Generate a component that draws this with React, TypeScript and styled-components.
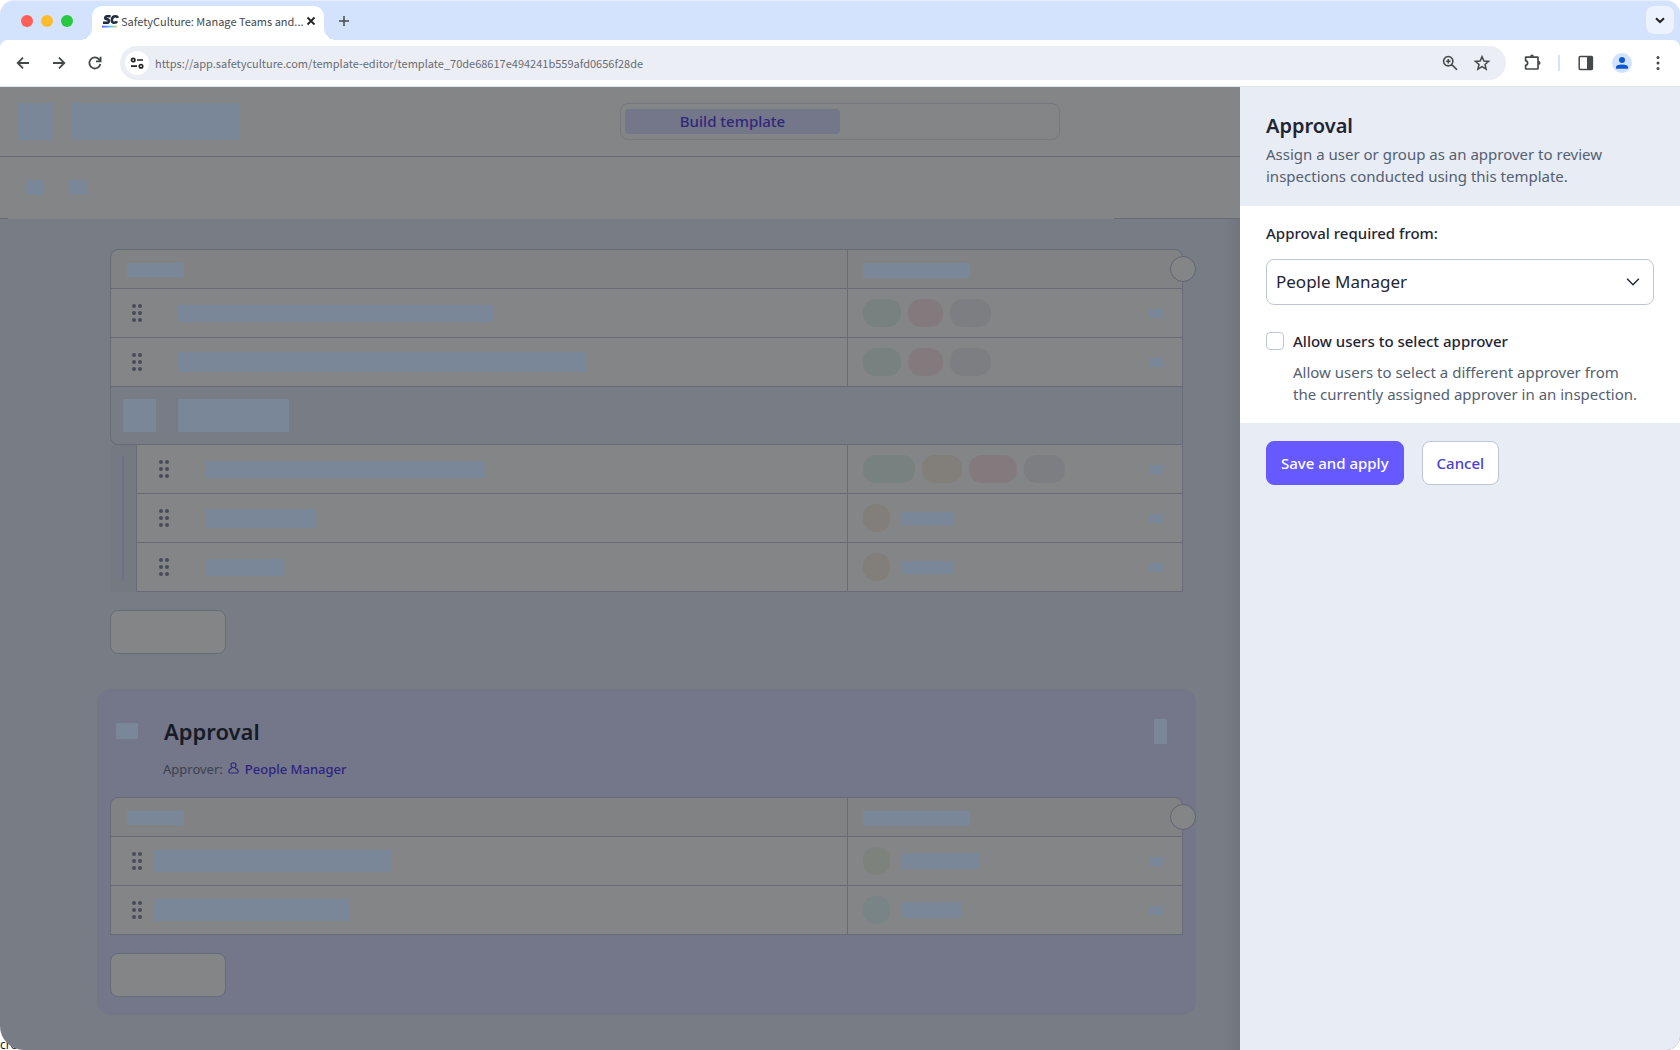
import React from "react";
import styled, { createGlobalStyle } from "styled-components";

const sans = `"Noto Sans", "Open Sans", sans-serif`;
const chromeSans = `"Noto Sans CJK SC", "Noto Sans", sans-serif`;

const c = {
  strip: "#d3e2fd",
  dimSurface: "#848587",
  dimHead: "#818284",
  dimCanvas: "#787c84",
  dimSection: "#787d85",
  dimLine: "#676b78",
  dimAccent: "#74768a",
  block: "#7a8799",
  green: "#778180",
  red: "#837a7e",
  grey: "#7d7e81",
  amber: "#827f7a",
  olive: "#7d827c",
  teal: "#788486",
  panel: "#e8ecf5",
  ink: "#1f2533",
  muted: "#545f70",
  outline: "#bfc6d4",
};

const GlobalStyle = createGlobalStyle`
  *, *::before, *::after { box-sizing: border-box; }
  html, body { margin: 0; background: #fff; }
  body { font-family: ${sans}; color: ${c.ink}; overflow: hidden; }
  button, select, input { font: inherit; margin: 0; }
  h1, h2, p { margin: 0; }
  svg { display: block; flex: none; }
`;

const Window = styled.div`
  position: relative;
  display: flex;
  flex-direction: column;
  height: 100vh;
`;

const CornerCaption = styled.span`
  position: absolute;
  left: 0;
  bottom: 0;
  font-size: 12px;
  line-height: 10px;
  color: #222;
`;

/* ---------- browser chrome ---------- */

const TabStrip = styled.div`
  display: flex;
  align-items: flex-end;
  height: 48px;
  margin-bottom: -8px;
  padding: 0 6px 8px 21px;
  background: ${c.strip};
  border-top: 1px solid #e6eefc;
  border-radius: 14px 14px 0 0;
`;

const Lights = styled.div`
  display: flex;
  align-self: flex-start;
  gap: 8px;
  margin: 14px 19px 0 0;
`;

const Light = styled.span<{ $color: string }>`
  width: 12px;
  height: 12px;
  border-radius: 50%;
  background: ${(p) => p.$color};
`;

const Tab = styled.div`
  position: relative;
  display: flex;
  align-items: center;
  gap: 2px;
  width: 232px;
  height: 34px;
  padding: 0 9px 4px 10px;
  background: #fff;
  border-radius: 10px 10px 0 0;
  &::before,
  &::after {
    content: "";
    position: absolute;
    bottom: 0;
    width: 12px;
    height: 12px;
  }
  &::before {
    right: 100%;
    background: radial-gradient(circle at 0 0, transparent 12px, #fff 12px);
  }
  &::after {
    left: 100%;
    background: radial-gradient(circle at 100% 0, transparent 12px, #fff 12px);
  }
`;

const TabTitle = styled.span`
  flex: 1;
  font-family: ${chromeSans};
  font-size: 11px;
  line-height: 18px;
  white-space: nowrap;
  color: #45484c;
`;

const IconButton = styled.button<{ $size?: number }>`
  display: grid;
  place-items: center;
  flex: none;
  width: ${(p) => p.$size ?? 20}px;
  height: ${(p) => p.$size ?? 20}px;
  padding: 0;
  border: 0;
  background: none;
  color: #46494a;
`;

const NewTab = styled(IconButton)`
  margin: 0 auto 9px 10px;
`;

const TabSearch = styled(IconButton)`
  margin-bottom: 6px;
  border-radius: 8px;
  background: #ecf2fe;
  color: #222;
`;

const Toolbar = styled.div`
  position: relative;
  display: flex;
  align-items: center;
  height: 47px;
  padding: 0 12px 0 13px;
  background: #fff;
  border-bottom: 1px solid #e3e6e8;
  border-radius: 8px 8px 0 0;
`;

const NavButtons = styled.div`
  display: flex;
  gap: 16px;
  margin-right: 15px;
`;

const AddressBar = styled.div`
  display: flex;
  align-items: center;
  flex: 1;
  gap: 6px;
  height: 34px;
  padding: 0 14px 0 5px;
  border-radius: 17px;
  background: #eceef6;
`;

const SiteInfo = styled(IconButton)`
  border-radius: 50%;
  background: #fff;
  color: #222;
`;

const UrlInput = styled.input`
  flex: 1;
  min-width: 0;
  padding: 0;
  border: 0;
  outline: 0;
  background: none;
  font-family: ${chromeSans};
  font-size: 11px;
  line-height: 18px;
  color: #696c71;
`;

const BarActions = styled.div`
  display: flex;
  gap: 12px;
`;

const ToolbarActions = styled.div`
  display: flex;
  align-items: center;
  gap: 16px;
  margin-left: 16px;
`;

const BarDivider = styled.span`
  width: 2px;
  height: 16px;
  background: ${c.strip};
`;

/* ---------- page ---------- */

const Page = styled.div`
  position: relative;
  display: flex;
  flex: 1;
  min-height: 0;
  border-radius: 0 0 14px 24px;
  overflow: hidden;
`;

const Editor = styled.main`
  display: flex;
  flex-direction: column;
  flex: 1;
  min-width: 0;
  background: ${c.dimCanvas};
`;

const EditorHeader = styled.header`
  display: grid;
  grid-template-columns: 1fr auto 1fr;
  align-items: center;
  height: 70px;
  padding: 0 17px 1px;
  background: ${c.dimSurface};
  border-bottom: 1px solid ${c.dimLine};
`;

const BlockGroup = styled.div<{ $gap: number }>`
  display: flex;
  gap: ${(p) => p.$gap}px;
`;

const Block = styled.span<{ $w: number; $h: number }>`
  display: block;
  flex: none;
  width: ${(p) => p.$w}px;
  height: ${(p) => p.$h}px;
  border-radius: 1px;
  background: ${c.block};
`;

const Segmented = styled.div`
  display: grid;
  grid-template-columns: 215px 215px;
  width: 440px;
  height: 37px;
  padding: 5px 4px;
  border: 1px solid #76787f;
  border-radius: 8px;
`;

const Segment = styled.button<{ $active?: boolean }>`
  padding: 0;
  border: 0;
  border-radius: 4px;
  background: ${(p) => (p.$active ? c.dimAccent : "transparent")};
  color: #2f2879;
  font-size: 15px;
  line-height: 20px;
  font-weight: 500;
`;

const SubHeader = styled.div`
  display: flex;
  align-items: center;
  height: 62px;
  padding: 0 26px 2px;
  background: linear-gradient(${c.dimLine}, ${c.dimLine}) 0 100% / 8px 1px no-repeat,
    linear-gradient(${c.dimLine}, ${c.dimLine}) 100% 100% / 566px 1px no-repeat,
    ${c.dimSurface};
`;

const Canvas = styled.div`
  flex: 1;
  margin-right: 440px;
  padding: 30px 44px 35px 97px;
  background: linear-gradient(90deg, transparent calc(100% - 16px), #70747c 100%);
`;

const Section = styled.section`
  padding: 0 13px;
`;

const ApprovalCard = styled.section`
  margin-top: 35px;
  padding: 29px 13px 18px;
  border-radius: 14px;
  background: ${c.dimAccent};
`;

const Grid = styled.div`
  position: relative;
  border-top: 1px solid ${c.dimLine};
  border-radius: 8px 8px 0 0;
`;

const RowBox = styled.div<{ $head?: boolean }>`
  display: grid;
  grid-template-columns: minmax(0, 1fr) 334px;
  height: ${(p) => (p.$head ? 39 : 49)}px;
  background: ${(p) => (p.$head ? c.dimHead : c.dimSurface)};
  border: 1px solid ${c.dimLine};
  border-top: 0;
  border-radius: ${(p) => (p.$head ? "8px 8px 0 0" : "0")};
`;

const NameCell = styled.div<{ $gap?: number; $head?: boolean }>`
  display: flex;
  align-items: center;
  gap: ${(p) => p.$gap ?? 36}px;
  padding-top: ${(p) => (p.$head ? 2 : 0)}px;
  padding-left: ${(p) => (p.$head ? 16 : 21)}px;
  border-right: 1px solid ${c.dimLine};
`;

const ReplyCell = styled.div<{ $gap?: number; $head?: boolean }>`
  display: flex;
  align-items: center;
  gap: ${(p) => p.$gap ?? 7}px;
  padding: ${(p) => (p.$head ? 2 : 0)}px 18px 0 15px;
`;

const Trailing = styled.span`
  margin-left: auto;
`;

const Pill = styled.span<{ $w: number; $color: string }>`
  width: ${(p) => p.$w}px;
  height: 28px;
  border-radius: 13px;
  background: ${(p) => p.$color};
`;

const SectionRow = styled.div`
  display: flex;
  align-items: center;
  gap: 22px;
  height: 58px;
  padding-left: 12px;
  background: ${c.dimSection};
  border: 1px solid ${c.dimLine};
  border-top: 0;
  border-radius: 0 0 0 8px;
`;

const Nested = styled.div`
  display: flex;
  background: linear-gradient(90deg, #757982, #757982) 0 0 / 26px 100% no-repeat;
`;

const Gutter = styled.div`
  flex: none;
  width: 26px;
  padding: 11px 12px;
  &::before {
    content: "";
    display: block;
    width: 2px;
    height: 100%;
    background: #6f7089;
  }
`;

const NestedRows = styled.div`
  flex: 1;
  min-width: 0;
  ${NameCell} {
    padding-left: 22px;
  }
`;

const AddRound = styled.button`
  position: absolute;
  top: 6px;
  right: -13px;
  width: 26px;
  height: 26px;
  padding: 0;
  border: 1px solid #60656f;
  border-radius: 50%;
  background: ${c.dimSurface};
`;

const GhostButton = styled.button`
  display: block;
  width: 116px;
  height: 44px;
  margin-top: 18px;
  border: 1px solid ${c.dimLine};
  border-radius: 8px;
  background: ${c.dimSurface};
`;

const CardTop = styled.div`
  display: flex;
  align-items: center;
  padding: 0 16px 0 6px;
`;

const CardTitle = styled.h2`
  margin: 0 auto 0 26px;
  font-size: 22px;
  line-height: 26px;
  font-weight: 600;
  color: #171b26;
`;

const ApproverLine = styled.p`
  display: flex;
  align-items: center;
  gap: 5px;
  margin: 15px 0 18px 53px;
  font-size: 13px;
  line-height: 20px;
  color: #3c414e;
`;

const ApproverLink = styled.a`
  display: inline-flex;
  align-items: center;
  gap: 6px;
  font-weight: 500;
  color: #2c2480;
  text-decoration: none;
`;

/* ---------- side panel: a drawer that lies over the editor ---------- */

const Panel = styled.aside`
  position: absolute;
  top: 0;
  right: 0;
  bottom: 0;
  width: 440px;
  background: ${c.panel};
`;

const PanelHead = styled.header`
  padding: 26px 26px 19px;
`;

const PanelTitle = styled.h1`
  margin-bottom: 4px;
  font-size: 20px;
  line-height: 26px;
  font-weight: 600;
`;

const Muted = styled.p`
  font-size: 15px;
  line-height: 22px;
  color: ${c.muted};
`;

const PanelBody = styled.div`
  padding: 16px 26px 18px;
  background: #fff;
`;

const FieldLabel = styled.label`
  display: block;
  font-size: 15px;
  line-height: 22px;
  font-weight: 500;
`;

const SelectBox = styled.div`
  position: relative;
  margin: 15px 0 25px;
  svg {
    position: absolute;
    top: 14px;
    right: 12px;
    pointer-events: none;
  }
`;

const Select = styled.select`
  display: block;
  appearance: none;
  width: 100%;
  height: 46px;
  padding: 0 40px 2px 9px;
  border: 1px solid ${c.outline};
  border-radius: 8px;
  background: #fff;
  color: ${c.ink};
  font-size: 17px;
`;

const CheckRow = styled.div`
  display: flex;
  align-items: center;
  gap: 9px;
  margin-bottom: 9px;
`;

const Checkbox = styled.input`
  appearance: none;
  width: 18px;
  height: 18px;
  border: 1px solid ${c.outline};
  border-radius: 4px;
  background: #fff;
`;

const CheckHint = styled(Muted)`
  padding: 0 14px 0 27px;
`;

const PanelActions = styled.div`
  display: flex;
  gap: 18px;
  padding: 18px 26px;
`;

const Button = styled.button<{ $primary?: boolean }>`
  height: 44px;
  padding: 0 14px;
  border: 1px solid ${(p) => (p.$primary ? "#6559ff" : c.outline)};
  border-radius: 8px;
  background: ${(p) => (p.$primary ? "#6559ff" : "#fff")};
  color: ${(p) => (p.$primary ? "#fff" : "#4740d4")};
  font-size: 15px;
  font-weight: 500;
`;

/* ---------- drawings ---------- */

const Stroke = ({ d, size = 20, width = 2 }: { d: string; size?: number; width?: number }) => (
  <svg width={size} height={size} viewBox="0 0 20 20" fill="none" stroke="currentColor" strokeWidth={width}>
    <path d={d} />
  </svg>
);

const Logo = () => (
  <svg width="17" height="14" viewBox="0 0 17 14" fill="none">
    <defs>
      <linearGradient id="underline" gradientUnits="userSpaceOnUse" x1="0" y1="0" x2="16" y2="0">
        <stop offset="0" stopColor="#6559ff" />
        <stop offset=".55" stopColor="#5cc8ff" />
        <stop offset="1" stopColor="#ffd54d" />
      </linearGradient>
    </defs>
    <path d="M8.6 2.3H5.2Q3.4 2.3 3.2 3.8Q3 5.2 5 5.3Q7.2 5.5 6.9 7.2Q6.6 8.8 4.8 8.8H1" stroke="#1f2d3d" strokeWidth="2.4" />
    <path d="M15.8 3.8Q15.4 2.3 13.4 2.3Q10.4 2.3 9.9 5.6Q9.5 8.8 12.2 8.8Q14.4 8.8 15 7.2" stroke="#1f2d3d" strokeWidth="2.6" />
    <path d="M0 12.6H15" stroke="url(#underline)" strokeWidth="1.8" />
  </svg>
);

const DragHandle = () => (
  <svg width="10" height="18" viewBox="0 0 10 18" fill="#474c59">
    {[2, 9, 16].map((y) => (
      <React.Fragment key={y}>
        <circle cx="2" cy={y} r="2" />
        <circle cx="8" cy={y} r="2" />
      </React.Fragment>
    ))}
  </svg>
);

const PersonIcon = () => (
  <svg width="11" height="14" viewBox="0 0 11 14" fill="none" stroke="currentColor" strokeWidth="1.1">
    <circle cx="5.5" cy="3.2" r="2.5" />
    <path d="M3.8 6.3C1.8 7 .8 8.4 .8 9.8Q.8 11 2 11H9Q10.2 11 10.2 9.8C10.2 8.4 9.2 7 7.2 6.3" />
  </svg>
);

/* ---------- table rows ---------- */

type Reply = { pills: [number, string][] } | { dot: string; w: number; h: number };
type RowData = { w: number; h: number; gap?: number; reply: Reply };

const fair = { pills: [[38, c.green], [35, c.red], [41, c.grey]] as [number, string][] };
const rating = { pills: [[52, c.green], [40, c.amber], [48, c.red], [41, c.grey]] as [number, string][] };

const pageRows: RowData[] = [
  { w: 315, h: 17, reply: fair },
  { w: 408, h: 20, reply: fair },
];
const nestedRows: RowData[] = [
  { w: 281, h: 17, reply: rating },
  { w: 110, h: 19, reply: { dot: c.amber, w: 53, h: 13 } },
  { w: 78, h: 17, reply: { dot: c.amber, w: 53, h: 13 } },
];
const approvalRows: RowData[] = [
  { w: 238, h: 22, gap: 12, reply: { dot: c.olive, w: 78, h: 16 } },
  { w: 196, h: 22, gap: 12, reply: { dot: c.teal, w: 61, h: 16 } },
];

const Row = ({ w, h, gap, reply }: RowData) => (
  <RowBox>
    <NameCell $gap={gap}>
      <DragHandle />
      <Block $w={w} $h={h} />
    </NameCell>
    <ReplyCell $gap={"dot" in reply ? 11 : 7}>
      {"dot" in reply ? (
        <>
          <Pill $w={27} $color={reply.dot} />
          <Block $w={reply.w} $h={reply.h} />
        </>
      ) : (
        reply.pills.map(([pw, color], i) => <Pill key={i} $w={pw} $color={color} />)
      )}
      <Trailing>
        <Block $w={15} $h={9} />
      </Trailing>
    </ReplyCell>
  </RowBox>
);

const HeadRow = () => (
  <>
    <RowBox $head>
      <NameCell $head>
        <Block $w={57} $h={14} />
      </NameCell>
      <ReplyCell $head>
        <Block $w={107} $h={15} />
      </ReplyCell>
    </RowBox>
    <AddRound aria-label="Add" />
  </>
);

export default function App() {
  return (
    <>
      <GlobalStyle />
      <Window>
        <CornerCaption>cree</CornerCaption>
        <TabStrip>
          <Lights>
            <Light $color="#ff5f57" />
            <Light $color="#febb2e" />
            <Light $color="#28c840" />
          </Lights>
          <Tab>
            <Logo />
            <TabTitle>SafetyCulture: Manage Teams and...</TabTitle>
            <IconButton $size={10} aria-label="Close tab">
              <svg width="10" height="10" viewBox="0 0 10 10" stroke="#222" strokeWidth="1.8">
                <path d="M1.5 1.5L8.5 8.5M8.5 1.5L1.5 8.5" />
              </svg>
            </IconButton>
          </Tab>
          <NewTab aria-label="New tab">
            <Stroke d="M10 5V15M5 10H15" width={1.5} />
          </NewTab>
          <TabSearch $size={28} aria-label="Search tabs">
            <Stroke d="M6 8.2L10 12L14 8.2" />
          </TabSearch>
        </TabStrip>

        <Toolbar>
          <NavButtons>
            <IconButton aria-label="Back">
              <Stroke d="M16 10H5M10 4.7L4.7 10L10 15.3" width={1.8} />
            </IconButton>
            <IconButton aria-label="Forward">
              <Stroke d="M4 10H15M10 4.7L15.3 10L10 15.3" width={1.8} />
            </IconButton>
            <IconButton aria-label="Reload">
              <Stroke d="M15.3 11A5.5 5.5 0 1 1 14 6.3L15.2 7.6M15.6 3.8V8.3H11" width={1.8} />
            </IconButton>
          </NavButtons>
          <AddressBar>
            <SiteInfo $size={24} aria-label="Site information">
              <svg width="14" height="14" viewBox="0 0 14 14" fill="none" stroke="currentColor" strokeWidth="1.7">
                <circle cx="3.2" cy="4" r="1.7" />
                <path d="M7 4H13M1 10.2H7" />
                <circle cx="11" cy="10.2" r="1.7" />
              </svg>
            </SiteInfo>
            <UrlInput
              aria-label="Address"
              defaultValue="https://app.safetyculture.com/template-editor/template_70de68617e494241b559afd0656f28de"
            />
            <BarActions>
              <IconButton aria-label="Zoom">
                <Stroke d="M8.3 3.5A4.7 4.7 0 1 1 8.2 3.5ZM11.8 11.6L17 16.8M8.3 6V10.4M6.1 8.2H10.5" width={1.6} />
              </IconButton>
              <IconButton aria-label="Bookmark">
                <Stroke d="M10 3.6L11.9 8L16.6 8.4L13 11.5L14.1 16.1L10 13.6L5.9 16.1L7 11.5L3.4 8.4L8.1 8Z" width={1.5} />
              </IconButton>
            </BarActions>
          </AddressBar>
          <ToolbarActions>
            <IconButton aria-label="Extensions">
              <svg width="20" height="20" viewBox="0 0 20 20" fill="none" stroke="currentColor" strokeWidth="1.7">
                <path d="M4 4.2H15.6Q16 4.2 16 4.6V15.6Q16 16 15.6 16H4.2Q3.6 16 3.6 15.4V12.4Q5.6 12 5.6 10Q5.6 8 3.6 7.6V4.6Q3.6 4.2 4 4.2Z" />
                <path d="M8 3.8Q8.2 1.6 10 1.6Q11.8 1.6 12 3.8ZM16.4 8Q18.6 8.2 18.6 10Q18.6 11.8 16.4 12Z" fill="currentColor" stroke="none" />
              </svg>
            </IconButton>
            <BarDivider />
            <IconButton aria-label="Side panel">
              <svg width="20" height="20" viewBox="0 0 20 20">
                <rect x="3.2" y="3.6" width="13.2" height="13" rx="1" fill="none" stroke="currentColor" strokeWidth="1.5" />
                <path d="M11 3.6H16.4V16.6H11Z" fill="currentColor" />
              </svg>
            </IconButton>
            <IconButton aria-label="Profile">
              <svg width="20" height="20" viewBox="0 0 20 20" fill="#0b57d0">
                <circle cx="10" cy="10" r="10" fill={c.strip} />
                <circle cx="10" cy="7" r="3" />
                <path d="M4 15.8V14.2Q4 11.4 10 11.4Q16 11.4 16 14.2V15.8Z" />
              </svg>
            </IconButton>
            <IconButton aria-label="Menu">
              <svg width="20" height="20" viewBox="0 0 20 20" fill="currentColor">
                <circle cx="10" cy="4.5" r="1.5" />
                <circle cx="10" cy="10" r="1.5" />
                <circle cx="10" cy="15.5" r="1.5" />
              </svg>
            </IconButton>
          </ToolbarActions>
        </Toolbar>

        <Page>
          <Editor>
            <EditorHeader>
              <BlockGroup $gap={17}>
                <Block $w={37} $h={37} />
                <Block $w={169} $h={37} />
              </BlockGroup>
              <Segmented>
                <Segment $active>Build template</Segment>
                <Segment aria-label="Report" />
              </Segmented>
            </EditorHeader>
            <SubHeader>
              <BlockGroup $gap={26}>
                <Block $w={18} $h={15} />
                <Block $w={18} $h={15} />
              </BlockGroup>
            </SubHeader>
            <Canvas>
              <Section>
                <Grid>
                  <HeadRow />
                  {pageRows.map((r, i) => (
                    <Row key={i} {...r} />
                  ))}
                  <SectionRow>
                    <Block $w={33} $h={33} />
                    <Block $w={111} $h={33} />
                  </SectionRow>
                  <Nested>
                    <Gutter />
                    <NestedRows>
                      {nestedRows.map((r, i) => (
                        <Row key={i} {...r} />
                      ))}
                    </NestedRows>
                  </Nested>
                </Grid>
                <GhostButton aria-label="Add question" />
              </Section>
              <ApprovalCard>
                <CardTop>
                  <Block $w={22} $h={16} />
                  <CardTitle>Approval</CardTitle>
                  <Block $w={13} $h={25} />
                </CardTop>
                <ApproverLine>
                  Approver:
                  <ApproverLink href="#approver">
                    <PersonIcon />
                    People Manager
                  </ApproverLink>
                </ApproverLine>
                <Grid>
                  <HeadRow />
                  {approvalRows.map((r, i) => (
                    <Row key={i} {...r} />
                  ))}
                </Grid>
                <GhostButton aria-label="Add question" />
              </ApprovalCard>
            </Canvas>
          </Editor>

          <Panel>
            <PanelHead>
              <PanelTitle>Approval</PanelTitle>
              <Muted>Assign a user or group as an approver to review inspections conducted using this template.</Muted>
            </PanelHead>
            <PanelBody>
              <FieldLabel htmlFor="approver">Approval required from:</FieldLabel>
              <SelectBox>
                <Select id="approver" defaultValue="People Manager">
                  <option>People Manager</option>
                </Select>
                <Stroke d="M3.5 6.5L10 13L16.5 6.5" width={1.6} size={18} />
              </SelectBox>
              <CheckRow>
                <Checkbox type="checkbox" id="allow" />
                <FieldLabel htmlFor="allow">Allow users to select approver</FieldLabel>
              </CheckRow>
              <CheckHint>Allow users to select a different approver from the currently assigned approver in an inspection.</CheckHint>
            </PanelBody>
            <PanelActions>
              <Button $primary>Save and apply</Button>
              <Button>Cancel</Button>
            </PanelActions>
          </Panel>
        </Page>
      </Window>
    </>
  );
}
